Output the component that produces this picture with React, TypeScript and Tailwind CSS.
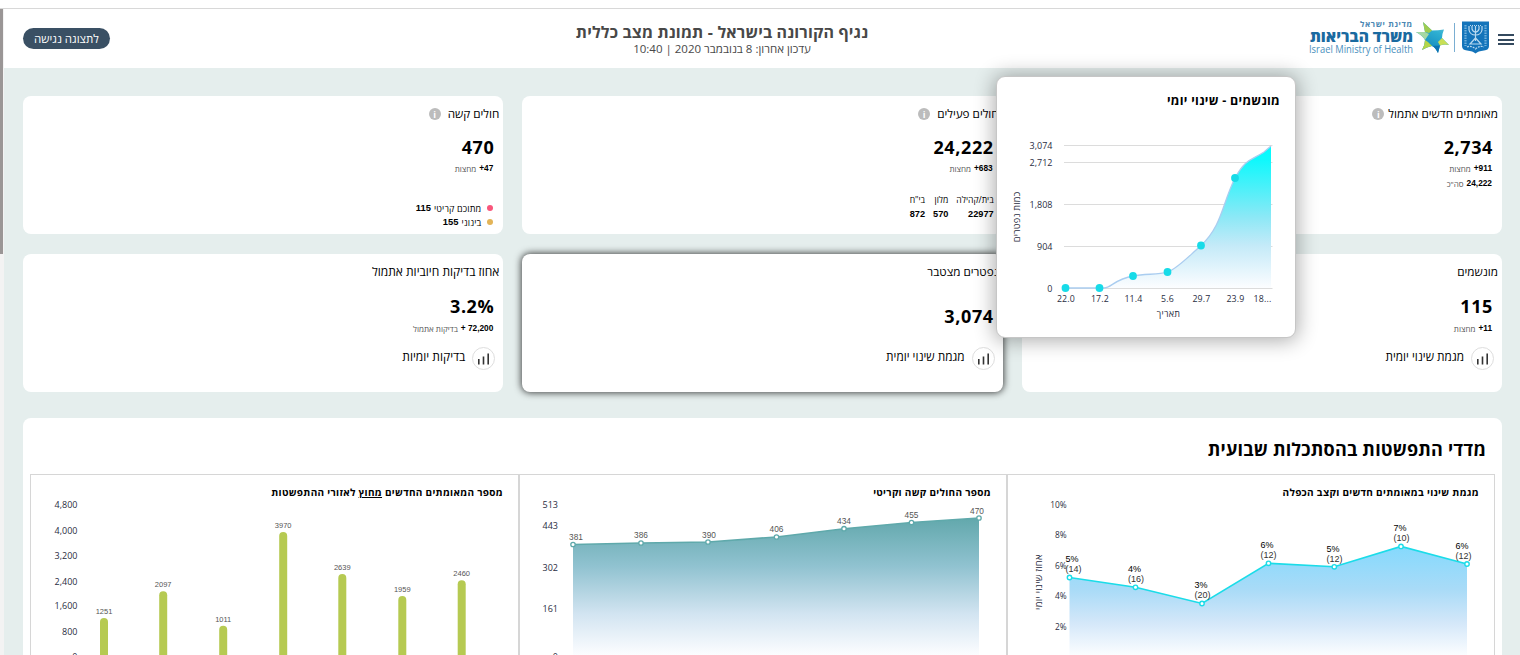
import React from "react";

type Children = { children?: React.ReactNode };

const sans = "font-['Open_Sans','Noto_Sans',sans-serif]";

function Star() {
  return (
    <svg className="ml-[6px] h-[33px] w-[33px] shrink-0" viewBox="0 0 33 33">
      <defs>
        <linearGradient id="starBlue" x1="1" y1="0" x2="0.500" y2="1">
          <stop offset="0" stopColor="#7cc9dc" />
          <stop offset="0.400" stopColor="#2fb0d2" />
          <stop offset="1" stopColor="#0f86bd" />
        </linearGradient>
      </defs>
      <path d="M7 1 L16 9.500 Q22 9.500 28 8.500 Q26 13 26 17 L33 24 Q28 23 24 24.500 L22 32 Q19 26 16 25 Q11 26 6 29 Q9 24 9 19 Q6 14 0 11 L9 11 Z" fill="url(#starBlue)" />
      <path d="M7 1 L16 9.500 L13 12 L9 11 Z" fill="#9fcc4f" />
      <path d="M0 11 L9 11 L13 13 L9 19 Q6 14 0 11 Z" fill="#a5d8a4" />
      <path d="M6 29 Q9 24 9 19 L12 21 L16 25 Q11 26 6 29 Z" fill="#b4d64b" />
      <path d="M33 24 L26 17 L22 21 L24 24.500 Q28 23 33 24 Z" fill="#c9df55" />
      <path d="M16 25 L24 24.500 L22 32 Q19 26 16 25 Z" fill="#0b72b2" />
    </svg>
  );
}

function Emblem() {
  return (
    <svg className="h-[33px] w-[27px] shrink-0" viewBox="0 0 27 33">
      <path d="M0 0.500 H27 V25 Q27 29 22 29.500 Q16 30 13.500 32.500 Q11 30 5 29.500 Q0 29 0 25 Z" fill="#1474ba" />
      <g fill="none" stroke="#b9d9ef" strokeWidth="1.200">
        <path d="M7 5 V9 Q8 14 13.500 14 Q19 14 20 9 V5" />
        <path d="M10 5 V8 Q11 11 13.500 11 Q16 11 17 8 V5" />
        <path d="M13.500 5 V20 M8 23 L13.500 17 L19 23 Z" />
        <path d="M3.500 4 V25 M23.500 4 V25" strokeDasharray="1.500 1" strokeWidth="2.200" stroke="#6fb0dc" />
        <path d="M5 26 Q9 24 13.500 28 Q18 24 22 26" strokeDasharray="2 1" />
        <path d="M8 4.500 H19" strokeDasharray="1 1" />
      </g>
    </svg>
  );
}

function Header() {
  return (
    <header className="grid h-[59px] shrink-0 grid-cols-[226px_1fr_150px] bg-white">
      <div className="flex pr-[6px] pt-[12px]">
        <div className="ml-[9px] mt-[13px] flex h-[11px] w-4 shrink-0 flex-col justify-between">
          <i className="h-[2px] bg-[#34495e]" />
          <i className="h-[2px] bg-[#34495e]" />
          <i className="h-[2px] bg-[#34495e]" />
        </div>
        <Emblem />
        <div className="ml-[5px] mr-[7px] mt-[2px] h-[29px] w-px shrink-0 bg-[#7aaed2]" />
        <Star />
        <svg className="-mr-[3px] h-[36px] w-[105px] shrink-0 [direction:ltr]" viewBox="1308 20.500 105 36" fontFamily="'Open Sans', sans-serif">
          <text x="1360" y="26.500" fontSize="8" fontWeight="700" textLength="52" fill="#4a87b3">מדינת ישראל</text>
          <text x="1310" y="41" fontSize="15" fontWeight="800" textLength="103" lengthAdjust="spacingAndGlyphs" fill="#1a6aa0">משרד הבריאות</text>
          <text x="1309" y="52" fontSize="10" textLength="104" lengthAdjust="spacingAndGlyphs" fill="#4a8fbd">Israel Ministry of Health</text>
        </svg>
      </div>
      <div className="flex flex-col items-center pt-[14px] text-[#484848]">
        <h1 className="text-[16px] font-bold leading-[18px] tracking-[0.16px] whitespace-nowrap">נגיף הקורונה בישראל - תמונת מצב כללית</h1>
        <p className="text-[11.500px] leading-[16px] whitespace-nowrap">עדכון אחרון: 8 בנובמבר 2020 | 10:40</p>
      </div>
      <div className="flex justify-end pl-[23px] pt-[19px]">
        <button className="flex h-[21px] w-[87px] items-center justify-center rounded-full bg-[#3a5064] text-[11.500px] leading-none text-white whitespace-nowrap">לתצוגה נגישה</button>
      </div>
    </header>
  );
}

function Info({ gap }: { gap: string }) {
  return (
    <span className={"flex h-[12px] w-[12px] items-center justify-center rounded-full bg-[#bcbcbc] text-[9px] font-bold leading-none text-white " + gap}>i</span>
  );
}

function Card({ title, info, active, titleSize = "text-[11.700px]", children }: Children & { title: string; info?: string; active?: boolean; titleSize?: string }) {
  return (
    <section className={"h-[138px] rounded-lg bg-white " + (active ? "shadow-[0_0_7px_1px_rgba(0,0,0,0.7)]" : "")}>
      <h2 className={"flex h-[36px] items-center pr-[4px] text-black whitespace-nowrap " + titleSize}>
        {title}
        {info && <Info gap={info} />}
      </h2>
      <div className="pr-[9px]">{children}</div>
    </section>
  );
}

function Big({ children, height = "h-[31px]" }: Children & { height?: string }) {
  return <div className={"flex items-center text-[18px] font-bold leading-none tracking-[0.6px] text-black " + height}>{children}</div>;
}

function Small({ value, label }: { value: string; label: string }) {
  return (
    <div className="flex h-[15px] items-center gap-[3px] pr-[1px] text-[8px] leading-none text-[#555]">
      <b className="font-['Liberation_Sans',sans-serif] text-[8.300px] text-black [direction:ltr]">{value}</b>
      <span>{label}</span>
    </div>
  );
}

function Trend({ label, size = "text-[11.800px]" }: { label: string; size?: string }) {
  return (
    <div className="-mr-[1px] flex h-[23px] gap-[7px]">
      <span className="flex h-[23px] w-[23px] items-center justify-center rounded-full border border-[#dedede]">
        <svg className="h-[13px] w-[13px]" viewBox="0 0 13 13" stroke="#333" strokeWidth="1.600">
          <path d="M1.800 7 V12.500 M6.500 4.500 V12.500 M11.200 1.500 V12.500" />
        </svg>
      </span>
      <span className={"pt-[1px] leading-[17px] text-black " + size}>{label}</span>
    </div>
  );
}

function Place({ label, value }: { label: string; value: string }) {
  return (
    <div className="flex flex-col">
      <span className="h-[13px] text-[8.600px] leading-[13px]">{label}</span>
      <b className="font-['Liberation_Sans',sans-serif] text-[9.200px] leading-[14px]">{value}</b>
    </div>
  );
}

function Severity({ dot, label, value }: { dot: string; label: string; value: string }) {
  return (
    <div className="flex h-[14px] items-center pr-[1px] text-[9px] leading-none">
      <i className={"ml-[6px] h-[6px] w-[6px] rounded-full " + dot} />
      <span className="tracking-[0.150px]">{label}</span>
      <b className="mr-[3px] font-['Liberation_Sans',sans-serif] text-[9.400px]">{value}</b>
    </div>
  );
}

function Popup() {
  const dots = [[1065.5, 288], [1099.5, 288], [1133, 276], [1167.5, 272], [1201, 245.5], [1235, 178]];
  const curve = "M1065 288 H1104 C1111 288 1115 279 1133 276 C1146 273.500 1158 275 1167.500 272 C1177 269 1188 257 1201 245.500 C1222 226 1222 204 1235 178 C1246 158 1252 160 1264 152 L1271 146";
  const xs: [number, string][] = [[1066, "22.0"], [1100, "17.2"], [1133.5, "11.4"], [1167.5, "5.6"], [1201.5, "29.7"], [1235.5, "23.9"], [1262.5, "18..."]];
  const ys: [number, string][] = [[145.5, "3,074"], [162.5, "2,712"], [204.5, "1,808"], [246.5, "904"], [288.5, "0"]];
  return (
    <aside className="absolute left-[996px] top-[76px] h-[262px] w-[300px] rounded-[9px] border border-[#c6c6c6] bg-white shadow-[0_1px_20px_2px_rgba(0,0,0,0.32)]">
      <h3 className="pr-[15px] pt-[15px] text-[12.500px] font-bold leading-[18px] tracking-[0.270px] text-black">מונשמים - שינוי יומי</h3>
      <svg className="block h-[227px] w-[298px] [direction:ltr]" viewBox="997 110 298 227" fontFamily="'Open Sans', sans-serif" fontSize="9" fill="#2a2d42">
        <defs>
          <linearGradient id="cyanArea" x1="0" y1="0" x2="0" y2="1">
            <stop offset="0" stopColor="#00fcff" />
            <stop offset="0.100" stopColor="#10f8fc" />
            <stop offset="0.500" stopColor="#8ce8f6" />
            <stop offset="0.700" stopColor="#c4eaf8" />
            <stop offset="1" stopColor="#fcfdff" />
          </linearGradient>
        </defs>
        {ys.map(([y, t]) => (
          <g key={t}>
            <path d={`M1064 ${y} H1272.500`} stroke="#dcdcdc" />
            <text x="1052.500" y={y + 3.5} fontSize="9" textAnchor="end">{t}</text>
          </g>
        ))}
        <path d={curve + " V288 Z"} fill="url(#cyanArea)" />
        <path d={curve} fill="none" stroke="#aacdf0" strokeWidth="1.300" />
        {dots.map(([x, y]) => <circle key={x} cx={x} cy={y} r="3.900" fill="#17dbe8" />)}
        {xs.map(([x, t]) => <text key={t} x={x} y="302" fontSize="8.800" letterSpacing="0.200" textAnchor="middle">{t}</text>)}
        <text x="1168.500" y="317" letterSpacing="0.300" textAnchor="middle">תאריך</text>
        <text transform="translate(1020 217) rotate(-90)" fontSize="9.200" letterSpacing="0.200" textAnchor="middle">כמות נפטרים</text>
      </svg>
    </aside>
  );
}

function Panel({ title, children }: Children & { title: React.ReactNode }) {
  return (
    <div className="h-[220px] border border-[#d6d6d6]">
      <h3 className="h-[25px] pr-[15px] pt-[9px] text-[10px] font-bold leading-[17px] tracking-[0.300px] text-black whitespace-nowrap">{title}</h3>
      {children}
    </div>
  );
}

function ChangeChart() {
  const pts: [number, number, string, string][] = [
    [1069.5, 577.5, "5%", "(14)"], [1135.5, 587.3, "4%", "(16)"], [1202, 603.5, "3%", "(20)"], [1268.5, 563.3, "6%", "(12)"],
    [1334.3, 566.8, "5%", "(12)"], [1401, 546.4, "7%", "(10)"], [1467, 564, "6%", "(12)"],
  ];
  const tx = [1065.5, 1128, 1194.5, 1260.5, 1326.5, 1393.5, 1455.5];
  const ty = [562, 572, 588, 548, 552, 531, 549];
  const line = pts.map((p) => p[0] + " " + p[1]).join(" L");
  const ticks: [number, string][] = [[505, "10%"], [535, "8%"], [566, "6%"], [596, "4%"], [627, "2%"]];
  return (
    <svg className="block h-[155px] w-[486px] overflow-visible [direction:ltr]" viewBox="1008 500 486 155" fontSize="9">
      <defs>
        <linearGradient id="skyArea" gradientUnits="userSpaceOnUse" x1="0" y1="546" x2="0" y2="655">
          <stop offset="0" stopColor="#84d9fd" />
          <stop offset="0.400" stopColor="#a9dbf7" />
          <stop offset="0.700" stopColor="#d3e7f9" />
          <stop offset="1" stopColor="#fbfdff" />
        </linearGradient>
      </defs>
      <path d={`M${line} V655 H1069.500 Z`} fill="url(#skyArea)" />
      <path d={"M" + line} fill="none" stroke="#1bdce8" strokeWidth="1.600" />
      {pts.map((p) => <circle key={p[0]} cx={p[0]} cy={p[1]} r="2.200" fill="#fff" stroke="#1bdce8" strokeWidth="1.400" />)}
      <g fontFamily="'Open Sans', sans-serif" fill="#2a2d42">
        {ticks.map(([y, t]) => <text key={t} x="1066.500" y={y + 3} fontSize="8.300" textAnchor="end">{t}</text>)}
        <text transform="translate(1042 582) rotate(-90)" fontSize="9.500" letterSpacing="0.250" textAnchor="middle">אחוז שינוי יומי</text>
      </g>
      <g fontFamily="'Liberation Sans', sans-serif">
        {pts.map((p, i) => (
          <g key={p[0]}>
            <text x={tx[i]} y={ty[i]} fill="#000">{p[2]}</text>
            <text x={tx[i]} y={ty[i] + 10} fill="#333">{p[3]}</text>
          </g>
        ))}
      </g>
    </svg>
  );
}

function SevereChart() {
  const pts: [number, number, string, number, number][] = [
    [573, 544.5, "381", 576, 540], [641, 543, "386", 641, 538], [708, 542, "390", 709, 538], [776.5, 537, "406", 776.5, 532],
    [844, 528.7, "434", 844, 524], [911.5, 522.5, "455", 911.5, 518], [979, 518, "470", 977, 514],
  ];
  const line = pts.map((p) => p[0] + " " + p[1]).join(" L");
  const ticks: [number, string][] = [[505, "513"], [526, "443"], [568, "302"], [609, "161"], [656.5, "0"]];
  return (
    <svg className="block h-[155px] w-[486px] overflow-visible [direction:ltr]" viewBox="520 500 486 155">
      <defs>
        <linearGradient id="tealArea" gradientUnits="userSpaceOnUse" x1="0" y1="518" x2="0" y2="655">
          <stop offset="0" stopColor="#62a8ac" />
          <stop offset="0.350" stopColor="#90c2d0" />
          <stop offset="0.700" stopColor="#d2e4f1" />
          <stop offset="1" stopColor="#fcfdff" />
        </linearGradient>
      </defs>
      <path d={`M${line} V655 H573 Z`} fill="url(#tealArea)" />
      <path d={"M" + line} fill="none" stroke="#5fa9ab" strokeWidth="1.600" />
      {pts.map((p) => <circle key={p[0]} cx={p[0]} cy={p[1]} r="2.200" fill="#fff" stroke="#5fa9ab" strokeWidth="1.300" />)}
      <g fontFamily="'Liberation Sans', sans-serif" fontSize="8.300" fill="#555" textAnchor="middle">
        {pts.map((p) => <text key={p[2]} x={p[3]} y={p[4]}>{p[2]}</text>)}
      </g>
      <g fontFamily="'Open Sans', sans-serif" fontSize="9" fill="#2a2d42" textAnchor="end">
        {ticks.map(([y, t]) => <text key={t} x="558" y={y + 3.3}>{t}</text>)}
      </g>
    </svg>
  );
}

function OutsideChart() {
  const bars: [number, number, string][] = [
    [104, 618, "1251"], [163.2, 591.3, "2097"], [223.2, 625.7, "1011"], [283.2, 532, "3970"], [342.3, 574, "2639"], [402.3, 596, "1959"], [461.7, 580.2, "2460"],
  ];
  const ticks: [number, string][] = [[505, "4,800"], [531, "4,000"], [556, "3,200"], [582, "2,400"], [606, "1,600"], [632, "800"], [656.5, "0"]];
  return (
    <svg className="block h-[155px] w-[487px] overflow-visible [direction:ltr]" viewBox="31 500 487 155">
      <g fill="#b6ca52">
        {bars.map(([x, y]) => <rect key={x} x={x - 4} y={y} width="8" height={680 - y} rx="4" />)}
      </g>
      <g fontFamily="'Liberation Sans', sans-serif" fontSize="7.500" fill="#555" textAnchor="middle">
        {bars.map(([x, y, t]) => <text key={t} x={x} y={y - 4}>{t}</text>)}
      </g>
      <g fontFamily="'Open Sans', sans-serif" fontSize="9" fill="#2a2d42" textAnchor="end">
        {ticks.map(([y, t]) => <text key={t} x="77.500" y={y + 3.3}>{t}</text>)}
      </g>
    </svg>
  );
}

export default function App() {
  return (
    <div dir="rtl" className={"relative flex h-[655px] w-[1520px] flex-col overflow-hidden bg-[#e5eeed] text-black " + sans}>
      <div className="h-[9px] shrink-0 border-b border-[#d8d8d8] bg-white" />
      <Header />
      <main className="flex flex-col pl-[23px] pr-[18px] pt-[28px]">
        <div className="grid grid-cols-3 gap-x-[19px] gap-y-[20px]">
          <Card title="מאומתים חדשים אתמול" info="mr-[4px]">
            <Big height="h-[29px]">2,734</Big>
            <Small value="+911" label="מחצות" />
            <Small value="24,222" label={'סה"כ'} />
          </Card>
          <Card title="חולים פעילים" info="mr-[7px]">
            <Big height="h-[29px]">24,222</Big>
            <Small value="+683" label="מחצות" />
            <div className="mt-[18px] flex gap-[8px]">
              <Place label="בית/קהילה" value="22977" />
              <Place label="מלון" value="570" />
              <Place label={'בי"ח'} value="872" />
            </div>
          </Card>
          <Card title="חולים קשה" info="mr-[7px]">
            <Big height="h-[29px]">470</Big>
            <Small value="+47" label="מחצות" />
            <div className="mt-[25px]">
              <Severity dot="bg-[#f9567b]" label="מתוכם קריטי" value="115" />
              <Severity dot="bg-[#e3b457]" label="בינוני" value="155" />
            </div>
          </Card>
          <Card title="מונשמים">
            <Big>115</Big>
            <Small value="+11" label="מחצות" />
            <div className="mt-[11px]"><Trend label="מגמת שינוי יומית" /></div>
          </Card>
          <Card title="נפטרים מצטבר" active>
            <div className="h-[10px]" />
            <Big>3,074</Big>
            <div className="mt-[16px]"><Trend label="מגמת שינוי יומית" /></div>
          </Card>
          <Card title="אחוז בדיקות חיוביות אתמול" titleSize="text-[12px]">
            <Big><span dir="ltr">3.2%</span></Big>
            <Small value="+ 72,200" label="בדיקות אתמול" />
            <div className="mt-[11px]"><Trend label="בדיקות יומיות" size="text-[12px]" /></div>
          </Card>
        </div>
        <section className="mt-[26px] h-[300px] rounded-lg bg-white px-[7px]">
          <h2 className="h-[56px] pr-[9px] pt-[19px] text-[18px] font-bold leading-[24px] tracking-[0.180px]">מדדי התפשטות בהסתכלות שבועית</h2>
          <div className="grid grid-cols-[488px_488px_489px]">
            <Panel title="מגמת שינוי במאומתים חדשים וקצב הכפלה"><ChangeChart /></Panel>
            <Panel title="מספר החולים קשה וקריטי"><SevereChart /></Panel>
            <Panel title={<>מספר המאומתים החדשים <u>מחוץ</u> לאזורי ההתפשטות</>}><OutsideChart /></Panel>
          </div>
        </section>
      </main>
      <Popup />
      <div className="absolute left-0 top-[9px] h-[646px] w-[4px] bg-[#f3f3f3]">
        <div className="mr-auto h-[245px] w-[3px] bg-[#9a9696]" />
      </div>
    </div>
  );
}
